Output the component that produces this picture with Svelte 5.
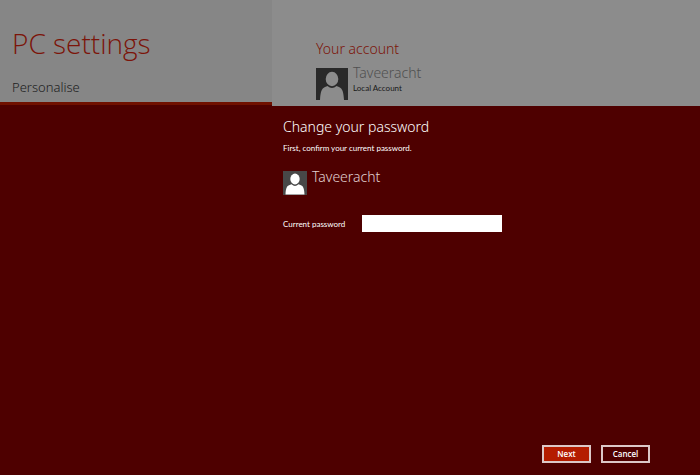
<script lang="ts">
    let user = "Taveeracht";
    let password = "";
</script>

<div class="page">
    <div class="settings">
        <aside>
            <h1>PC settings</h1>
            <p class="item">Personalise</p>
        </aside>

        <section class="account">
            <h2>Your account</h2>
            <div class="user">
                <svg class="avatar" viewBox="0 0 32 32" aria-hidden="true">
                    <rect width="32" height="32" fill="#292929" />
                    <ellipse cx="16" cy="11" rx="6.3" ry="7.2" />
                    <path d="M4 32C4.500 24 5.500 20.500 9 19L11.500 18Q16 22 20.500 18L23 19C26.500 20.500 27.500 24 28 32Z" />
                </svg>
                <div>
                    <p class="name">{user}</p>
                    <p class="type">Local Account</p>
                </div>
            </div>
        </section>
    </div>

    <form class="dialog" on:submit|preventDefault>
        <div class="body">
            <h2>Change your password</h2>
            <p class="hint">First, confirm your current password.</p>

            <div class="user">
                <svg class="avatar" viewBox="0 0 24 24" aria-hidden="true">
                    <rect width="24" height="24" fill="#484848" />
                    <ellipse cx="12" cy="8" rx="4.700" ry="5.400" />
                    <path d="M2.500 23.500C2.800 18 3.500 15.300 6 14.300L8.500 13.300Q12 16.500 15.500 13.300L18 14.300C20.500 15.300 21.200 18 21.500 23.500Z" />
                </svg>
                <p class="name">{user}</p>
            </div>

            <div class="field">
                <label for="password">Current password</label>
                <input id="password" type="password" bind:value={password} />
            </div>
        </div>

        <div class="buttons">
            <button class="next" type="submit">Next</button>
            <button type="button">Cancel</button>
        </div>
    </form>
</div>

<style>
    :global(body) {
        margin: 0;
        background: #4e0000;
    }

    h1,
    h2,
    p {
        margin: 0;
        font-weight: 300;
    }

    .page {
        min-height: 100vh;
        display: flex;
        flex-direction: column;
        background: #4e0000;
        font-family: "Noto Sans", "Open Sans", sans-serif;
    }

    .settings {
        display: grid;
        grid-template-columns: 272px 1fr;
        background: #4e0000;
    }

    aside {
        align-self: start;
        padding: 23px 12px 4px;
        border-bottom: 3px solid #701000;
        background: #868686;
    }

    h1 {
        font-family: "Open Sans", "Noto Sans", sans-serif;
        font-size: 28px;
        line-height: 40px;
        color: #7c1409;
    }

    .item {
        margin-top: 13px;
        font-size: 13px;
        line-height: 22px;
        color: #202020;
    }

    .account {
        padding: 38px 44px 6px;
        background: #8c8c8c;
    }

    h2 {
        font-size: 14px;
        line-height: 22px;
    }

    .account h2 {
        color: #7c1409;
    }

    .user {
        display: flex;
        gap: 5px;
    }

    .avatar {
        flex: none;
        width: 32px;
        height: 32px;
        margin-top: 8px;
        fill: #8c8c8c;
    }

    .name {
        font-size: 14px;
        line-height: 22px;
    }

    .account .name {
        margin-top: 2px;
        color: #505050;
    }

    .type,
    .hint,
    label,
    input,
    button {
        font-family: Lato, "Open Sans", sans-serif;
        font-size: 8px;
        font-weight: 400;
    }

    .type {
        line-height: 8px;
        color: #181818;
    }

    .dialog {
        flex: 1;
        display: flex;
        flex-direction: column;
        justify-content: space-between;
        color: #fff;
    }

    .body {
        padding: 10px 12px 0 283px;
    }

    .hint {
        margin-top: 4px;
        line-height: 12px;
    }

    .dialog .user {
        margin-top: 9px;
    }

    .dialog .name {
        margin-top: 3px;
        color: #e0d0d0;
    }

    .dialog .avatar {
        width: 24px;
        height: 24px;
        fill: #fff;
    }

    .field {
        display: grid;
        grid-template-columns: 79px 140px;
        align-items: center;
        margin-top: 20px;
    }

    label {
        line-height: 12px;
    }

    input {
        box-sizing: border-box;
        width: 100%;
        height: 17px;
        padding: 0 4px;
        border: 0;
        background: #fff;
    }

    .buttons {
        display: flex;
        justify-content: flex-end;
        gap: 10px;
        padding: 12px 50px 12px 12px;
    }

    button {
        width: 49px;
        height: 18px;
        padding: 0;
        border: 2px solid #dcc8c8;
        background: #4e0000;
        color: #fff;
        font-family: "Open Sans", sans-serif;
        font-weight: 600;
        line-height: 12px;
    }

    .next {
        background: #b41c00;
    }
</style>
